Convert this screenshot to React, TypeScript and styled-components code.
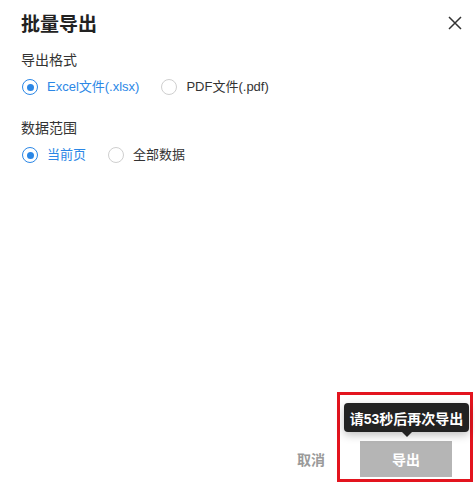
import styled, { createGlobalStyle } from "styled-components";

const GlobalStyle = createGlobalStyle`
  html, body {
    margin: 0;
    padding: 0;
    background: #fff;
  }
  body {
    font-family: "Liberation Sans", "Noto Sans CJK SC", sans-serif;
    color: #333;
  }
`;

const Dialog = styled.div`
  width: 475px;
  height: 496px;
  box-sizing: border-box;
  display: flex;
  flex-direction: column;
  padding: 0 2px 14px 21px;
  background: #fff;
`;

const Header = styled.div`
  display: flex;
  align-items: center;
  justify-content: space-between;
  height: 45px;
  padding-right: 10px;
`;

const Title = styled.h2`
  margin: 0;
  font-size: 19px;
  font-weight: 700;
  color: #222;
`;

const CloseButton = styled.button`
  border: 0;
  background: transparent;
  padding: 0;
  width: 16px;
  height: 16px;
  display: flex;
  align-items: center;
  justify-content: center;
  cursor: pointer;
`;

const Body = styled.div`
  flex: 1;
  display: flex;
  flex-direction: column;
`;

const Section = styled.div<{ $first?: boolean }>`
  display: flex;
  flex-direction: column;
  margin-top: ${({ $first }) => ($first ? "6px" : "23px")};
`;

const Label = styled.div`
  font-size: 14px;
  line-height: 18px;
  color: #333;
`;

const RadioGroup = styled.div`
  display: flex;
  align-items: center;
  gap: 21px;
  margin-top: 9px;
`;

const RadioItem = styled.label<{ $checked?: boolean }>`
  display: flex;
  align-items: center;
  gap: 9px;
  font-size: 13px;
  line-height: 18px;
  color: ${({ $checked }) => ($checked ? "#2b87e6" : "#333")};
  cursor: pointer;
`;

const RadioCircle = styled.span<{ $checked?: boolean }>`
  flex-shrink: 0;
  width: 16px;
  height: 16px;
  box-sizing: border-box;
  border-radius: 50%;
  border: 1.5px solid ${({ $checked }) => ($checked ? "#2b87e6" : "#cfcfcf")};
  display: flex;
  align-items: center;
  justify-content: center;
  margin-left: 1px;

  &::after {
    content: "";
    width: 7px;
    height: 7px;
    border-radius: 50%;
    background: ${({ $checked }) => ($checked ? "#2b87e6" : "transparent")};
  }
`;

const Footer = styled.div`
  display: flex;
  align-items: flex-end;
  justify-content: flex-end;
  gap: 12px;
`;

const CancelButton = styled.button`
  border: 0;
  background: transparent;
  padding: 0;
  margin-bottom: 13px;
  font-family: inherit;
  font-size: 14px;
  font-weight: 700;
  color: #9a9a9a;
  cursor: pointer;
`;

const Highlight = styled.div`
  width: 136px;
  height: 90px;
  box-sizing: border-box;
  border: 3px solid #e3141e;
  display: flex;
  flex-direction: column;
  align-items: center;
  padding: 8px 0 0 2px;
`;

const Tooltip = styled.div`
  position: relative;
  width: 125px;
  height: 29px;
  box-sizing: border-box;
  border-radius: 4px;
  background: #222;
  color: #fff;
  font-size: 14px;
  font-weight: 700;
  display: flex;
  align-items: center;
  justify-content: center;
  box-shadow: 0 3px 8px rgba(0, 0, 0, 0.25);
  margin-left: 1px;

  &::after {
    content: "";
    position: absolute;
    left: 50%;
    bottom: -5px;
    margin-left: -5px;
    border-left: 5px solid transparent;
    border-right: 5px solid transparent;
    border-top: 5px solid #222;
  }
`;

const ExportButton = styled.button`
  margin-top: 9px;
  width: 92px;
  height: 36px;
  border: 0;
  background: #b5b5b5;
  color: #fff;
  font-family: inherit;
  font-size: 14px;
  font-weight: 700;
  cursor: not-allowed;
`;

const Radio = ({ checked, children }: { checked?: boolean; children: string }) => (
  <RadioItem $checked={checked}>
    <RadioCircle $checked={checked} />
    {children}
  </RadioItem>
);

export default function App() {
  return (
    <>
      <GlobalStyle />
      <Dialog>
        <Header>
          <Title>批量导出</Title>
          <CloseButton aria-label="关闭">
            <svg width="14" height="14" viewBox="0 0 14 14">
              <path d="M1 1L13 13M13 1L1 13" stroke="#333" strokeWidth="1.5" />
            </svg>
          </CloseButton>
        </Header>
        <Body>
          <Section $first>
            <Label>导出格式</Label>
            <RadioGroup>
              <Radio checked>Excel文件(.xlsx)</Radio>
              <Radio>PDF文件(.pdf)</Radio>
            </RadioGroup>
          </Section>
          <Section>
            <Label>数据范围</Label>
            <RadioGroup>
              <Radio checked>当前页</Radio>
              <Radio>全部数据</Radio>
            </RadioGroup>
          </Section>
        </Body>
        <Footer>
          <CancelButton>取消</CancelButton>
          <Highlight>
            <Tooltip>请53秒后再次导出</Tooltip>
            <ExportButton>导出</ExportButton>
          </Highlight>
        </Footer>
      </Dialog>
    </>
  );
}
